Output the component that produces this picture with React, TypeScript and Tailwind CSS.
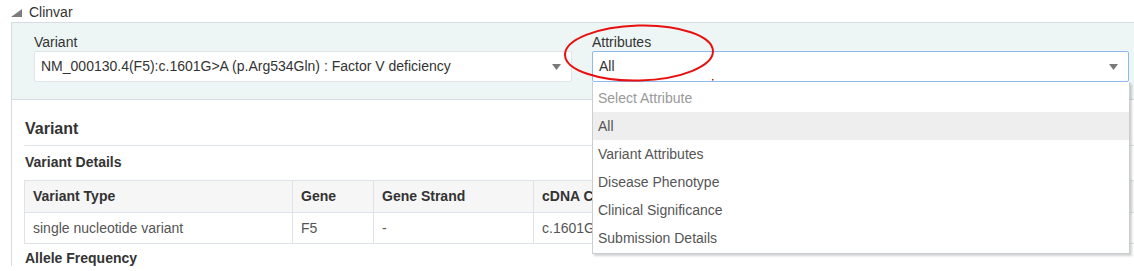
import { ReactNode } from 'react';

const options = ['Select Attribute', 'All', 'Variant Attributes', 'Disease Phenotype', 'Clinical Significance', 'Submission Details'];

function Caret() {
  return (
    <svg width="9" height="6" viewBox="0 0 9 6" className="shrink-0">
      <path d="M0 0 H9 L4.5 6 Z" fill="#7a7a7a" />
    </svg>
  );
}

function Field({ label, value, active, children }: { label: string; value: string; active?: boolean; children?: ReactNode }) {
  return (
    <div className="relative flex flex-col">
      <div className="leading-[16px]">{label}</div>
      <div
        className={
          'mt-[1px] h-[31px] flex items-center justify-between pl-[6px] pr-[10px] bg-white rounded-[2px] border ' +
          (active ? 'border-[#8fb8ec]' : 'border-[#e1e5e9]')
        }
      >
        <span className="truncate">{value}</span>
        <Caret />
      </div>
      {children}
    </div>
  );
}

export default function App() {
  return (
    <div className="relative w-[1134px] h-[271px] overflow-hidden bg-white text-[14px] text-[#333] font-['Liberation_Sans',Arial,sans-serif]">
      <div className="h-[22px] flex items-start pl-[11px] gap-[7px]">
        <svg width="11" height="8" viewBox="0 0 11 8" className="mt-[9px]">
          <path d="M11 0 V8 H0 Z" fill="#7d7d7d" />
        </svg>
        <span className="leading-[16px] mt-[4px]">Clinvar</span>
      </div>

      <div className="ml-[11px] border-l border-t border-[#d5dde4]">
        <div className="bg-[#eef6f5] border-b border-[#d5dde4] pl-[22px] pt-[11px] pb-[17px] flex gap-[20px]">
          <div className="w-[538px]">
            <Field label="Variant" value="NM_000130.4(F5):c.1601G>A (p.Arg534Gln) : Factor V deficiency" />
          </div>
          <div className="w-[537px]">
            <Field label="Attributes" value="All" active>
              <div className="absolute z-10 left-0 top-[48px] w-[538px] h-[172px] bg-white border-l border-r border-b border-[#c9ced3] shadow-[2px_2px_2px_rgba(0,0,0,0.18)] pt-[2px] text-[#555]">
                {options.map((o, i) => (
                  <div
                    key={o}
                    className={
                      'h-[28px] flex items-center pl-[5px] ' +
                      (i === 0 ? 'text-[#999]' : '') +
                      (i === 1 ? ' bg-[#eeeeee]' : '')
                    }
                  >
                    {o}
                  </div>
                ))}
              </div>
            </Field>
          </div>
        </div>

        <div className="pl-[12px] pt-[20px]">
          <h2 className="text-[16px] leading-[18px] font-bold pl-[1px]">Variant</h2>
          <div className="mt-[7px] border-t border-[#dde3e8]" />
          <div className="mt-[8px] leading-[16px] font-bold pl-[1px]">Variant Details</div>
          <table className="mt-[10px] w-[1140px] table-fixed border-collapse">
            <colgroup>
              <col className="w-[268px]" />
              <col className="w-[81px]" />
              <col className="w-[160px]" />
              <col />
            </colgroup>
            <thead>
              <tr className="h-[32px] bg-[#f6f6f6] text-left">
                <th className="border border-[#dde3e8] px-[8px] font-bold">Variant Type</th>
                <th className="border border-[#dde3e8] px-[8px] font-bold">Gene</th>
                <th className="border border-[#dde3e8] px-[8px] font-bold">Gene Strand</th>
                <th className="border border-[#dde3e8] px-[8px] font-bold">cDNA Change</th>
              </tr>
            </thead>
            <tbody>
              <tr className="h-[31px] text-[#555]">
                <td className="border border-[#dde3e8] px-[8px]">single nucleotide variant</td>
                <td className="border border-[#dde3e8] px-[8px]">F5</td>
                <td className="border border-[#dde3e8] px-[8px]">-</td>
                <td className="border border-[#dde3e8] px-[8px]">c.1601G&gt;A</td>
              </tr>
            </tbody>
          </table>
          <div className="mt-[6px] leading-[16px] font-bold pl-[1px]">Allele Frequency</div>
        </div>
      </div>

      {/* red annotation ring drawn over the screenshot */}
      <svg className="absolute left-[560px] top-[22px] pointer-events-none" width="160" height="62" viewBox="0 0 160 62">
        <ellipse cx="79" cy="31" rx="74" ry="27.5" fill="none" stroke="#e8100f" strokeWidth="2" transform="rotate(-1.5 79 31)" />
        <rect x="152" y="57" width="1.5" height="1.5" fill="#e8100f" />
      </svg>
    </div>
  );
}
